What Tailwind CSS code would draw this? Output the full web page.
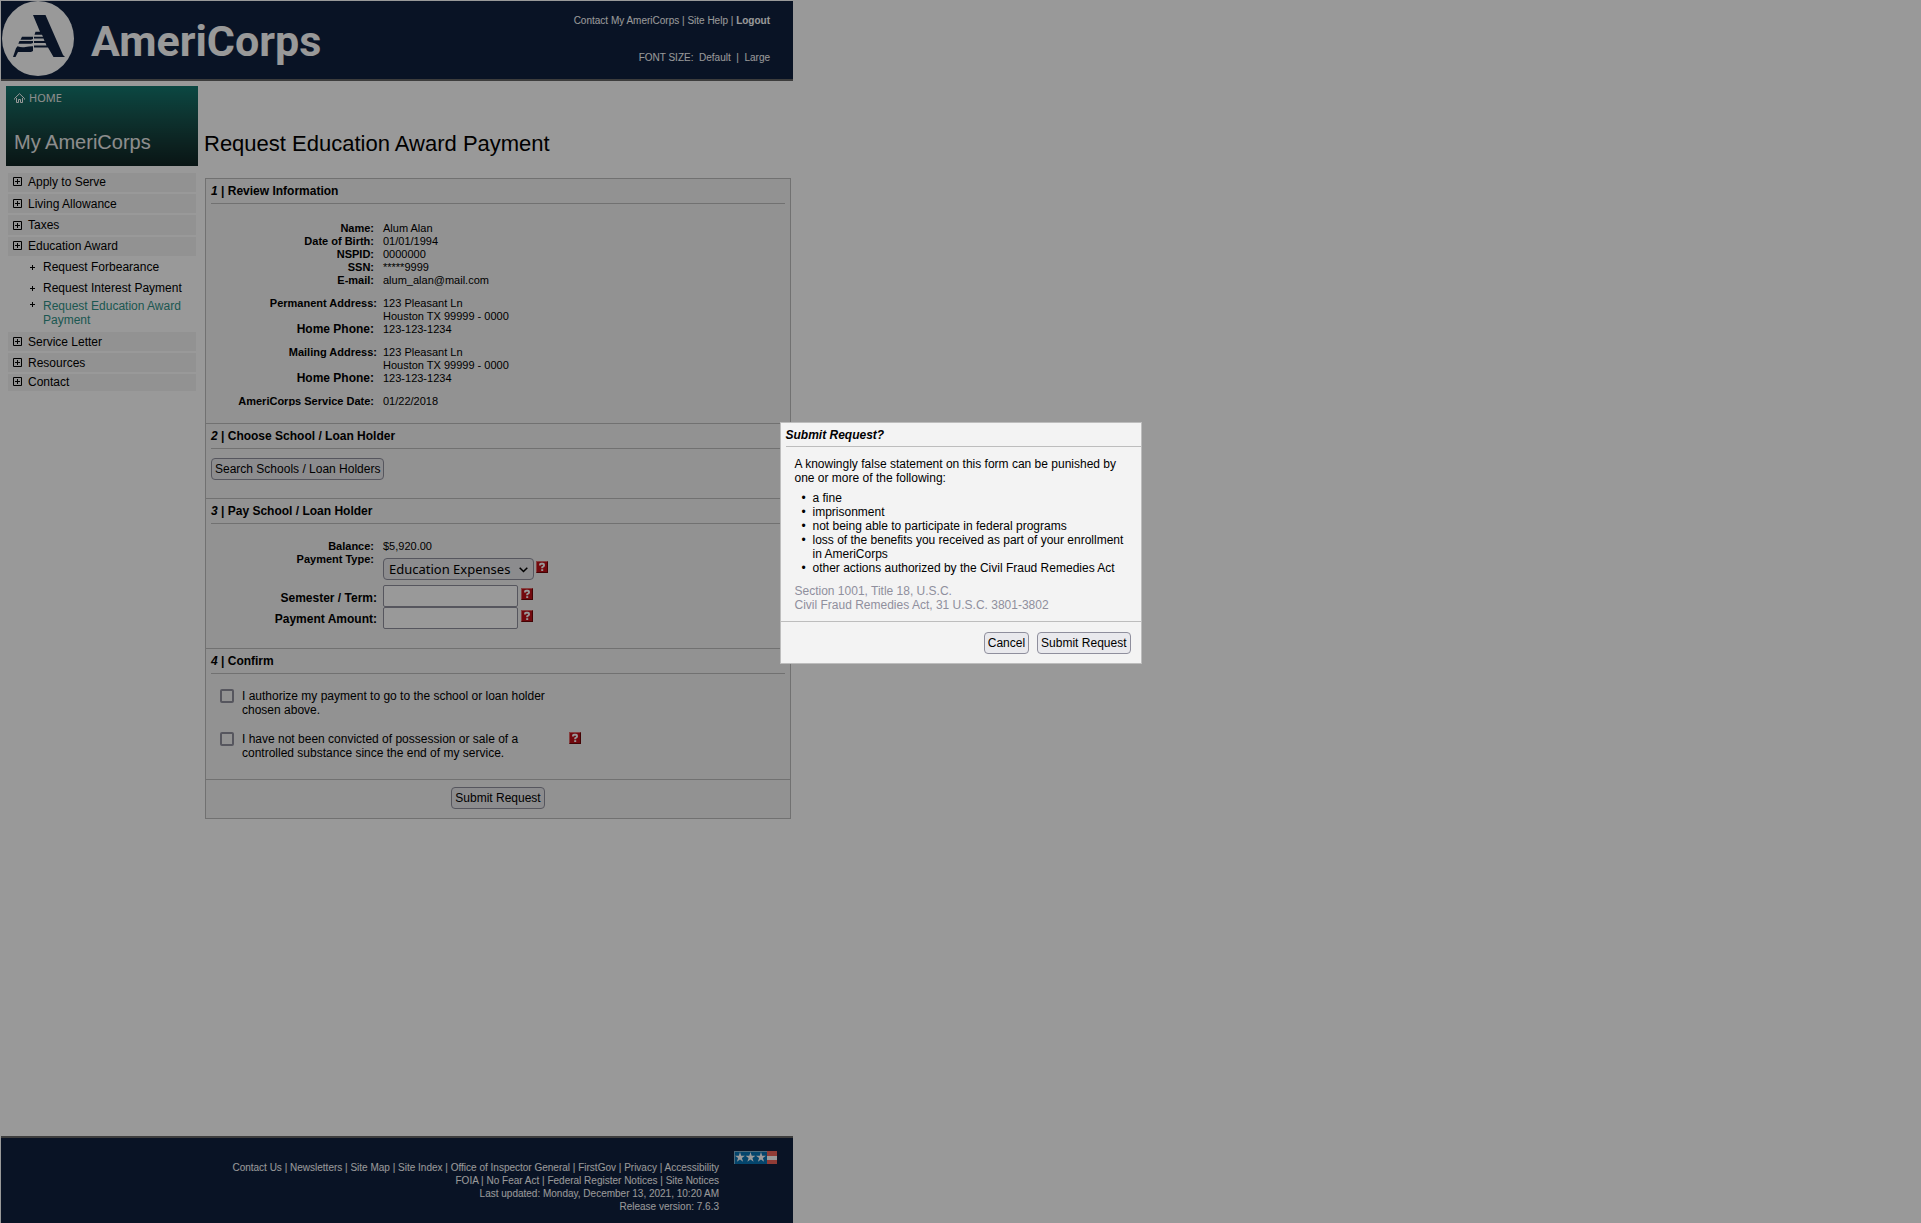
<!DOCTYPE html>
<html lang="en">
<head>
<meta charset="utf-8">
<title>My AmeriCorps - Request Education Award Payment</title>
<script src="https://cdn.jsdelivr.net/npm/@tailwindcss/browser@4"></script>
</head>
<body class="bg-white text-black text-xs leading-[14px] font-['Liberation_Sans',Arial,sans-serif]">
<svg class="hidden" aria-hidden="true">
  <symbol id="plus-box" viewBox="0 0 9 9"><path d="M.5.5h8v8h-8zM2 4.500h5M4.500 2v5" fill="none" stroke="#000"/></symbol>
  <symbol id="plus" viewBox="0 0 5 5"><path d="M0 2.500h5M2.500 0v5" stroke="#000"/></symbol>
  <symbol id="help" viewBox="0 0 12 12">
    <path d="M0 0h12v12H0z" fill="#c01018"/><path d="M0 0h12v1H1v11H0z" fill="#e06a6a"/><path d="M12 0v12H0l1-1h10V1z" fill="#6e0508"/>
    <path d="M4 4.500V3.700Q4 2.800 5 2.800h2q1 0 1 .9v.8q0 .6-.7 1L6.200 6.200v1" fill="none" stroke="#fff" stroke-width="1.900"/><path d="M5.200 8.200h2V10h-2z" fill="#fff"/>
  </symbol>
  <symbol id="star" viewBox="0 0 10 10"><path d="M5 0l1.200 3.700H10L6.900 6 8.100 9.700 5 7.400 1.900 9.700 3.100 6 0 3.700h3.800z" fill="#fff"/></symbol>
</svg>

<div class="flex min-h-screen w-full max-w-[793px] flex-col pt-px pl-px">
  <header class="flex h-20 justify-between border-b-2 border-[#666] bg-[#0f213f] text-[10px] leading-[13px] text-white">
    <a href="#" class="flex items-start gap-[17px] pl-px">
      <svg class="h-[75px] w-[72px]" viewBox="2 1 72 75" role="img" aria-label="AmeriCorps emblem">
        <ellipse cx="38" cy="38.500" rx="36" ry="37.500" fill="#fff"/>
        <g fill="#0f213f">
          <path d="M33 15h12.500l17.500 40 2 2H53.500L48 47.500H34v-2h12.500L45.500 43H34v-2h10.500L43.500 38.500H34v-1.800h9l-1-2h-7.500l1-3H40z"/>
          <path d="M22 36.800h11V39l-2 .8H20.500zM19.500 41h13.500v2l-2 .8H18.300zM16 48.300l1.500-2q4 1.300 8 .6t7.500-.6V51l-2 1H18l-2.500 5H13z"/>
        </g>
      </svg>
      <span class="mt-[15px] font-['Roboto'] text-[43px] leading-[50px] font-bold">AmeriCorps</span>
    </a>
    <div class="flex flex-col items-end gap-6 pt-[13px] pr-[23px]">
      <nav><a href="#">Contact My AmeriCorps</a> | <a href="#">Site Help</a> | <a href="#" class="font-bold">Logout</a></nav>
      <div>FONT SIZE:&nbsp; <a href="#">Default</a>&nbsp; |&nbsp; <a href="#">Large</a></div>
    </div>
  </header>

  <div class="flex grow items-start gap-[6px] pt-[5px] pr-[2px] pl-[5px]">
    <aside class="w-48 shrink-0">
      <div class="flex h-20 flex-col justify-between bg-linear-to-b from-[#12786f] to-[#102423] px-2 pt-[5px] pb-3 text-[#ececec]">
        <a href="#" class="flex items-center gap-1 font-['Noto_Sans'] text-[11px]">
          <svg class="h-[10px] w-[11px]" viewBox="0 0 11 10" fill="none" stroke="#fff"><path d="M.5 6.500v-1L5.500.7l5 4.800v1M2.500 5v4.500h2V6.500h2v3h2V5"/></svg>HOME</a>
        <div class="text-xl leading-6">My AmeriCorps</div>
      </div>
      <nav class="flex flex-col gap-[2px] px-[2px] pt-[7px]">
        <a href="#" class="flex h-[19px] items-center gap-[6px] bg-[#f3f3f3] pb-[2px] pl-[5px]"><svg class="size-[9px]"><use href="#plus-box"/></svg>Apply to Serve</a>
        <a href="#" class="flex h-[19px] items-center gap-[6px] bg-[#f3f3f3] pl-[5px]"><svg class="size-[9px]"><use href="#plus-box"/></svg>Living Allowance</a>
        <a href="#" class="flex h-5 items-center gap-[6px] bg-[#f3f3f3] pl-[5px]"><svg class="size-[9px]"><use href="#plus-box"/></svg>Taxes</a>
        <a href="#" class="flex h-[19px] items-center gap-[6px] bg-[#f3f3f3] pb-[2px] pl-[5px]"><svg class="size-[9px]"><use href="#plus-box"/></svg>Education Award</a>
        <div class="flex flex-col gap-[7px] pt-[2px] pl-[22px]">
          <a href="#" class="flex items-center gap-2"><svg class="size-[5px]"><use href="#plus"/></svg>Request Forbearance</a>
          <a href="#" class="flex items-center gap-2"><svg class="size-[5px]"><use href="#plus"/></svg>Request Interest Payment</a>
          <a href="#" class="-mt-[3px] flex items-start gap-2 pb-[3px] text-[#2f9287]"><svg class="mt-[3px] size-[5px] shrink-0"><use href="#plus"/></svg><span>Request Education Award Payment</span></a>
        </div>
        <a href="#" class="flex h-[19px] items-center gap-[6px] bg-[#f3f3f3] pl-[5px]"><svg class="size-[9px]"><use href="#plus-box"/></svg>Service Letter</a>
        <a href="#" class="flex h-[19px] items-center gap-[6px] bg-[#f3f3f3] pl-[5px]"><svg class="size-[9px]"><use href="#plus-box"/></svg>Resources</a>
        <a href="#" class="flex h-[17px] items-center gap-[6px] bg-[#f3f3f3] pb-[2px] pl-[5px]"><svg class="size-[9px]"><use href="#plus-box"/></svg>Contact</a>
      </nav>
    </aside>

    <main class="grow pt-[45px]">
      <h1 class="mb-[22px] text-[22px] leading-[25px]">Request Education Award Payment</h1>
      <form class="ml-px border border-[#bdbdbd] bg-[#f3f3f3]">
        <section class="px-[5px] pb-[15px]">
          <h2 class="border-b border-[#bdbdbd] pt-[5px] pb-[5px] font-bold"><i>1</i> | Review Information</h2>
          <dl class="grid grid-cols-[163px_1fr] gap-x-[9px] pt-[18px] text-[11px] leading-[13px] [&_dt]:text-right [&_dt]:font-bold">
            <dt>Name:</dt><dd>Alum Alan</dd>
            <dt>Date of Birth:</dt><dd>01/01/1994</dd>
            <dt>NSPID:</dt><dd>0000000</dd>
            <dt>SSN:</dt><dd>*****9999</dd>
            <dt>E-mail:</dt><dd>alum_alan@mail.com</dd>
            <dt class="-mr-[3px] mt-[10px]">Permanent Address:</dt><dd class="mt-[10px]">123 Pleasant Ln<br>Houston TX 99999 - 0000</dd>
            <dt class="text-xs leading-[13px]">Home Phone:</dt><dd>123-123-1234</dd>
            <dt class="-mr-[3px] mt-[10px]">Mailing Address:</dt><dd class="mt-[10px]">123 Pleasant Ln<br>Houston TX 99999 - 0000</dd>
            <dt class="text-xs leading-[13px]">Home Phone:</dt><dd>123-123-1234</dd>
            <dt class="mt-[10px] h-[11px] overflow-hidden">AmeriCorps Service Date:</dt><dd class="mt-[10px]">01/22/2018</dd>
          </dl>
        </section>

        <section class="border-t border-[#bdbdbd] px-[5px] pb-[18px]">
          <h2 class="mb-[9px] border-b border-[#bdbdbd] pt-[5px] pb-[5px] font-bold"><i>2</i> | Choose School / Loan Holder</h2>
          <button type="button" class="block h-[22px] rounded border border-[#8f8f9d] bg-[#e9e9ed] px-[3px]">Search Schools / Loan Holders</button>
        </section>

        <section class="border-t border-[#bdbdbd] px-[5px] pb-[19px]">
          <h2 class="border-b border-[#bdbdbd] pt-[5px] pb-[5px] font-bold"><i>3</i> | Pay School / Loan Holder</h2>
          <div class="grid grid-cols-[163px_1fr] gap-x-[9px] pt-4 text-right [&_label]:font-bold">
            <div class="text-[11px] leading-[13px] font-bold">Balance:</div><div class="text-left text-[11px] leading-[13px]">$5,920.00</div>
            <label for="type" class="text-[11px] leading-[13px]">Payment Type:</label>
            <div class="flex items-start gap-[2px] pt-[5px]">
              <div class="relative">
                <select id="type" class="h-[22px] w-[151px] appearance-none rounded border border-[#8f8f9d] bg-[#e9e9ed] pl-[5px] font-['Noto_Sans'] text-[13px] leading-[18px]"><option>Education Expenses</option></select>
                <svg class="pointer-events-none absolute top-[9px] right-[6px] h-[6px] w-[9px]" viewBox="0 0 9 6" fill="none" stroke="#000" stroke-width="1.500"><path d="M.7.7l3.800 3.800L8.300.7"/></svg>
              </div>
              <svg class="mt-[3px] size-3" role="img" aria-label="Help"><use href="#help"/></svg>
            </div>
            <label for="term" class="-mr-[3px] mt-[11px]">Semester / Term:</label>
            <div class="mt-[5px] flex items-start gap-[3px]"><input id="term" type="text" class="h-[22px] w-[135px] rounded-xs border border-[#8f8f9d] bg-white"><svg class="mt-[3px] size-3" role="img" aria-label="Help"><use href="#help"/></svg></div>
            <label for="amount" class="-mr-[3px] mt-[5px]">Payment Amount:</label>
            <div class="flex items-start gap-[3px]"><input id="amount" type="text" class="h-[22px] w-[135px] rounded-xs border border-[#8f8f9d] bg-white"><svg class="mt-[3px] size-3" role="img" aria-label="Help"><use href="#help"/></svg></div>
          </div>
        </section>

        <section class="border-t border-[#bdbdbd] px-[5px] pb-[19px]">
          <h2 class="border-b border-[#bdbdbd] pt-[5px] pb-[5px] font-bold"><i>4</i> | Confirm</h2>
          <div class="flex flex-col gap-[15px] pt-[15px] pl-[9px]">
            <div class="flex items-start">
              <input id="authorize" type="checkbox" class="size-[14px] shrink-0 appearance-none rounded-xs border-2 border-[#8f8f9d] bg-[#f3f3f3]">
              <label for="authorize" class="ml-2 w-[327px]">I authorize my payment to go to the school or loan holder chosen above.</label>
            </div>
            <div class="flex items-start">
              <input id="convicted" type="checkbox" class="size-[14px] shrink-0 appearance-none rounded-xs border-2 border-[#8f8f9d] bg-[#f3f3f3]">
              <label for="convicted" class="ml-2 w-[327px] pr-8">I have not been convicted of possession or sale of a controlled substance since the end of my service.</label>
              <svg class="size-3" role="img" aria-label="Help"><use href="#help"/></svg>
            </div>
          </div>
        </section>

        <div class="flex justify-center border-t border-[#bdbdbd] pt-[7px] pb-[9px]">
          <button type="button" class="h-[22px] rounded border border-[#8f8f9d] bg-[#e9e9ed] px-[3px]">Submit Request</button>
        </div>
      </form>
    </main>
  </div>

  <footer class="flex items-start justify-end gap-[15px] border-t-2 border-[#666] bg-[#0f213f] pt-[13px] pr-4 text-[10px] leading-[13px] text-white">
    <div class="pt-[10px] pb-[10px] text-right">
      <div><a href="#">Contact Us</a> | <a href="#">Newsletters</a> | <a href="#">Site Map</a> | <a href="#">Site Index</a> | <a href="#">Office of Inspector General</a> | <a href="#">FirstGov</a> | <a href="#">Privacy</a> | <a href="#">Accessibility</a></div>
      <div><a href="#">FOIA</a> | <a href="#">No Fear Act</a> | <a href="#">Federal Register Notices</a> | <a href="#">Site Notices</a></div>
      <div>Last updated: Monday, December 13, 2021, 10:20 AM</div>
      <div>Release version: 7.6.3</div>
    </div>
    <svg class="h-[13px] w-[43px]" viewBox="0 0 43 13" role="img" aria-label="USA.gov flag">
      <path d="M0 0h43v13H0z" fill="#7fb0cc"/><path d="M1 1h32v12H1z" fill="#0873b5"/>
      <path d="M33 0h10v13H33z" fill="#f0655a"/><path d="M33 5h10v4H33z" fill="#fff"/>
      <use href="#star" x="1" y="1" width="10" height="10"/><use href="#star" x="11.500" y="1" width="10" height="10"/><use href="#star" x="22" y="1" width="10" height="10"/>
    </svg>
  </footer>
</div>

<div class="fixed inset-0 flex items-start justify-center bg-black/40 pt-[422px]">
  <div role="dialog" aria-modal="true" aria-labelledby="dialog-title" class="w-[362px] border border-[#bdbdbd] bg-[#f3f3f3]">
    <h2 id="dialog-title" class="ml-[5px] border-b border-[#bdbdbd] pt-[5px] pb-[4px] font-bold italic">Submit Request?</h2>
    <div class="px-[14px] pt-[10px] pb-[9px]">
      <p>A knowingly false statement on this form can be punished by one or more of the following:</p>
      <ul class="mt-[6px] pl-[7px] [&>li]:flex [&>li]:before:w-[11px] [&>li]:before:shrink-0 [&>li]:before:content-['•']">
        <li>a fine</li>
        <li>imprisonment</li>
        <li>not being able to participate in federal programs</li>
        <li>loss of the benefits you received as part of your enrollment in AmeriCorps</li>
        <li>other actions authorized by the Civil Fraud Remedies Act</li>
      </ul>
      <p class="mt-[9px] text-[#8f8f9d]">Section 1001, Title 18, U.S.C.<br>Civil Fraud Remedies Act, 31 U.S.C. 3801-3802</p>
    </div>
    <div class="flex justify-end gap-2 border-t border-[#bdbdbd] pt-[10px] pr-[10px] pb-[9px]">
      <button type="button" class="h-[22px] rounded border border-[#8f8f9d] bg-[#e9e9ed] px-[3px]">Cancel</button>
      <button type="button" class="h-[22px] rounded border border-[#8f8f9d] bg-[#e9e9ed] px-[3px]">Submit Request</button>
    </div>
  </div>
</div>
</body>
</html>
